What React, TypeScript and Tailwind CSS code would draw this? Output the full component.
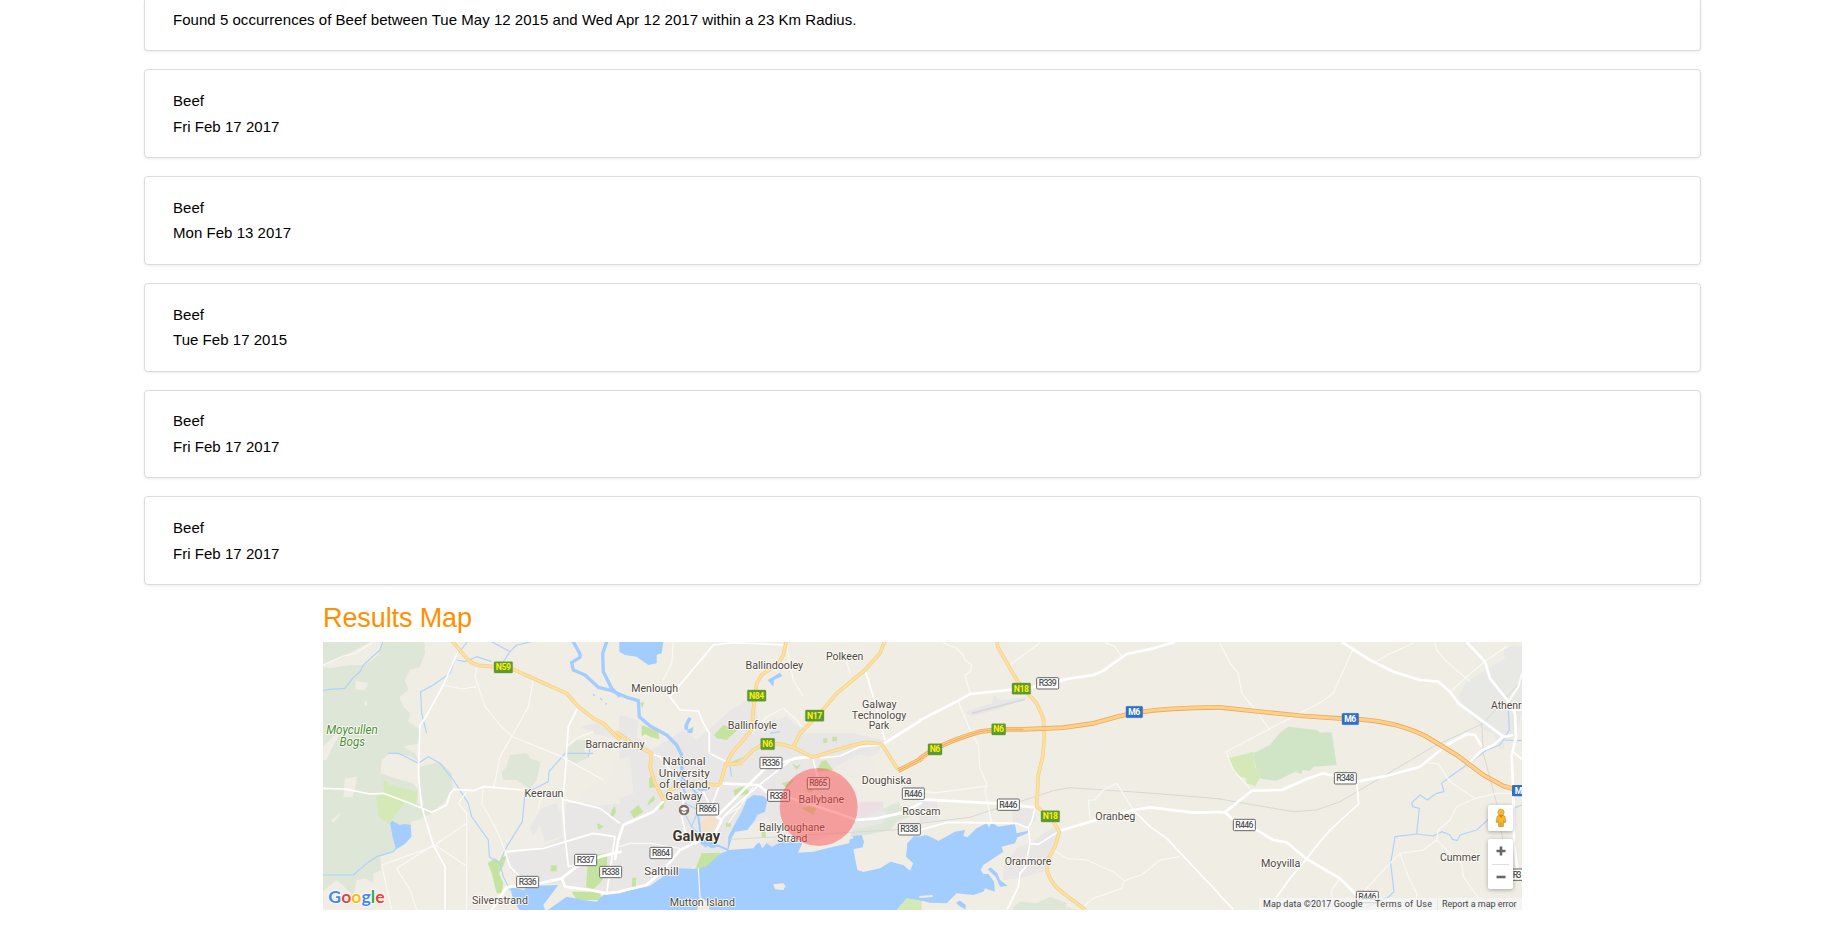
import React from "react";

const results = [
  { name: "Beef", date: "Fri Feb 17 2017" },
  { name: "Beef", date: "Mon Feb 13 2017" },
  { name: "Beef", date: "Tue Feb 17 2015" },
  { name: "Beef", date: "Fri Feb 17 2017" },
  { name: "Beef", date: "Fri Feb 17 2017" },
];

// The map is drawn in tiles; each has its own origin and three units per pixel.
type Tile = "W" | "C" | "E" | "F" | "N";
const origins: Record<Tile, string> = {
  W: "translate(-13 -52) scale(0.33333)",
  C: "translate(297 -12) scale(0.33333)",
  E: "translate(597 -12) scale(0.33333)",
  F: "translate(897 -12) scale(0.33333)",
  N: "translate(207 -2) scale(0.33333)",
};

type Layer = { fill?: string; stroke?: string; width?: number; shapes: [Tile, string][] };

const yellowRoads: [Tile, string][] = [
  ["W", "M424 150 L470 205 Q485 222 505 226 L550 230 L610 238 L680 270 L770 310 L805 350 L850 385 L880 400 L930 450"],
  ["N", "M258 275 L290 298 L320 318 L365 340 L360 380 L375 430 L402 482"],
  ["C", "M130 512 L150 480 L200 460 L270 463 L300 465"],
  ["C", "M499 32 L490 75 L475 100 L425 135 L410 160 L400 240 L395 300 L335 370 L315 410 L300 465"],
  ["C", "M795 32 L780 70 L735 120 L650 190 L600 250 L540 310 L520 350"],
  ["C", "M318 404 L360 400 L400 360 L430 342 L480 342 L520 352 L578 382 L700 345 L740 337 L785 342 L815 390 L835 420"],
  ["E", "M231 32 L233 50 L270 115 L300 165 L350 220 L370 265 L373 320 L368 380 L355 435 L350 530 L395 565 L418 605 L405 650 L383 690 L382 725 Q395 765 430 790 L497 840"],
];

const motorway: [Tile, string][] = [
  ["C", "M835 422 L905 386"],
  ["E", "M-2 387 L30 365 Q90 330 180 305 L240 298 L310 298 L430 293 L520 280 L600 258 L650 248 Q740 233 905 232"],
  ["F", "M-2 232 L130 246 L250 258 L370 266 L420 268 Q480 273 530 286 Q580 300 620 320 L710 375 L790 435 L850 468 L920 488"],
];

const layers: Layer[] = [
  {
    fill: "#dde6d7",
    shapes: [
      ["W", "M30 150 L343 150 L345 190 L330 230 L300 240 L285 270 L295 300 L268 322 L280 350 L300 370 L295 395 L325 415 L330 460 L300 465 L278 470 L315 490 L325 515 L305 500 L240 490 L215 510 L212 550 L255 565 L310 580 L325 600 L322 640 L388 655 L365 670 L325 690 L303 695 L305 740 L260 780 L210 800 L215 840 L190 850 L190 880 L165 865 L140 870 L130 915 L80 870 L30 910 Z"],
      ["W", "M330 530 L390 515 L425 550 L428 595 L400 640 L370 660 L345 655 L330 600Z"],
      ["W", "M600 495 L650 490 L662 506 L692 515 L680 570 L660 600 L620 570 L580 570 L575 545 L590 530Z"],
      ["W", "M765 480 L800 450 L850 450 L820 480 L840 500 L800 520 L775 510Z"],
      ["C", "M720 565 L770 545 L835 515 L850 540 L820 550 L905 545 L830 575 L810 600 L740 615 L690 622 L700 590Z"],
      ["E", "M280 832 L300 815 L350 820 L390 800 L440 820 L435 845 L280 845Z M440 832 L495 845 L440 845Z"],
    ],
  },
  {
    fill: "#f0ede5",
    shapes: [
      ["W", "M30 228 L100 200 L185 152 L218 152 L205 195 L165 225 L120 225 L60 235Z"],
      ["W", "M137 273 L175 278 L165 302 L136 298Z M163 335 L170 332 L172 347 L164 345Z"],
      ["W", "M105 565 L140 560 L138 585 L128 622 L100 622Z M65 690 L90 668 L85 685 L66 700Z"],
      ["W", "M30 480 L75 435 L90 430 L60 485 L50 510 L30 512Z"],
    ],
  },
  {
    fill: "#d0e5c5",
    shapes: [["F", "M100 370 L150 345 L178 310 L205 290 L290 300 L300 308 L335 307 L350 405 L280 410 L270 422 L247 420 L245 432 L225 425 L180 448 L165 453 L120 445 L108 415Z"]],
  },
  {
    fill: "#e9e7e5",
    shapes: [
      ["W", "M585 795 L700 770 L760 740 L768 640 L800 640 L930 640 L930 910 L840 900 L765 885 L690 880 L640 875 L600 840Z"],
      ["W", "M660 710 L695 655 L740 640 L755 680 L755 740 L705 755 L690 705 L670 740Z M810 410 L860 400 L930 430 L930 450 L850 430Z"],
      ["C", "M-2 255 L55 270 L50 320 L95 360 L190 300 L230 330 L265 300 L310 260 L330 240 L395 205 L420 280 L500 260 L560 310 L700 310 L790 330 L775 370 L690 400 L660 440 L710 480 L715 530 L760 540 L800 545 L790 580 L700 600 L560 640 L330 655 L230 705 L90 780 L-2 790 Z"],
      ["E", "M275 540 L340 530 L350 570 L325 590 L280 580Z M295 650 L330 640 L400 590 L415 610 L385 720 L300 745 L250 750 L250 710Z"],
      ["E", "M135 245 L215 220 L220 195 L240 210 L330 200 L240 235 L155 260Z M-2 510 L50 510 L55 570 L-2 575Z"],
    ],
  },
  {
    fill: "#e8e9e5",
    shapes: [["F", "M715 200 L740 155 L855 85 L850 60 L880 45 L906 50 L906 240 L890 320 L850 330 L855 360 L835 350 L820 310 L790 300 L740 240Z"]],
  },
  {
    fill: "#efece6",
    shapes: [
      ["C", "M600 435 L720 372 L777 388 L770 440 L700 460 L690 440Z M330 620 L440 560 L475 620 L400 655 L330 655Z"],
      ["W", "M800 620 L860 580 L930 590 L930 640 L850 650Z"],
      ["N", "M250 360 L300 350 L310 460 L270 475 L230 440Z"],
    ],
  },
  { fill: "#ede0e4", shapes: [["C", "M715 515 L790 515 L790 535 L740 560 L715 565Z"]] },
  { fill: "#f5e0c8", shapes: [["C", "M240 580 L262 560 L290 560 L292 590 L262 605 L245 600Z"]] },
  {
    fill: "#d5e9b8",
    shapes: [
      ["W", "M220 568 L240 585 L322 605 L318 642 L285 635 L260 670 L235 700 L205 680 L198 620 L222 600Z"],
      ["F", "M25 385 L100 365 L105 410 L122 440 L105 468 L80 460 L78 445 L60 440 L40 425Z"],
      ["C", "M828 842 L860 805 L905 812 L905 842z"],
    ],
  },
  {
    fill: "#c5e3a0",
    shapes: [
      ["W", "M533 820 L555 805 L570 815 L575 800 L590 798 L580 828 L567 850 L580 880 L575 910 L560 910 L545 850Z"],
      ["W", "M835 795 L892 790 L890 850 L870 880 L850 897 L828 892Z M785 905 L870 905 L875 930 L800 930Z M865 700 L880 710 L865 720Z M902 672 L915 648 L918 665 L905 685Z M722 826h18v18h-18z"],
      ["N", "M335 255 L385 275 L388 298 L360 290 L345 282 L335 290Z M300 515 L325 495 L340 515 L312 535Z M355 485 L372 465 L375 480 L352 497Z M388 490 L405 483 L400 505 L388 510Z M357 415 L370 405 L378 440 L358 445Z M330 190 L342 185 L338 205Z M240 528 L250 500 L258 515 L248 533Z M200 550 L222 560 L205 568Z"],
      ["C", "M282 315 L310 285 L352 300 L320 330 L290 325Z M225 718 L245 670 L303 668 L265 715Z M610 325h12v14h-12z M637 320h14v14h-14z M340 480 L375 468 L390 490 L345 500Z M515 400 L530 408 L543 403 L530 420z M603 395 L618 390 L640 420 L590 425Z M485 460 L525 448 L500 475Z M425 605h12v18h-12z M37 743h11v30h-13z M325 400 L370 380 L345 402z M545 535 L560 530 L592 530 L580 555Z M318 578h15v12h-15z M555 480 L590 468 L570 490z"],
    ],
  },
  {
    fill: "#a3ccff",
    shapes: [
      ["W", "M240 700 L246 692 L270 705 L285 702 L302 705 L304 740 L285 762 L258 778 L248 740Z"],
      ["W", "M600 890 L640 900 L660 888 L745 885 L730 905 L700 945 L705 960 L635 970 L610 930Z M700 970 L770 920 L820 930 L860 935 L880 915 L935 905 L935 970Z"],
      ["W", "M850 310 L856 317 L850 318Z M870 322 L878 330 L872 330Z M886 338 L892 342 L886 344z"],
      ["C", "M-2 34 L130 34 L125 70 L110 75 L110 100 L85 105 L50 80 L15 75 L-2 65Z"],
      ["C", "M443 150 L480 128 L487 138 L462 150 L460 170Z M193 285 L205 262 L215 265 L205 285 L203 302 L193 298Z M203 300 L220 290 L217 310 L202 308Z"],
      ["C", "M-2 786 L90 768 L150 725 L175 715 L235 717 L260 708 L303 670 L322 662 L295 650 L275 655 L248 640 L235 615 L262 628 L285 640 L323 656 L325 620 L340 590 L365 545 L380 510 L400 495 L430 498 L442 510 L435 545 L412 555 L405 570 L382 600 L345 605 L335 625 L325 660 L400 655 L412 640 L420 640 L427 655 L440 640 L455 650 L490 632 L545 635 L545 645 L533 668 L580 665 L640 650 L687 640 L690 628 L700 625 L698 618 L725 615 L732 635 L728 652 L700 658 L712 720 L730 726 L780 715 L812 695 L850 705 L870 722 L880 700 L858 680 L862 640 L882 618 L905 620 L905 812 L860 805 L828 842 L-2 842Z"],
      ["E", "M-2 620 L18 615 L40 625 L55 633 L105 605 L135 600 L130 618 L142 622 L170 595 L200 580 L207 592 L215 578 L235 590 L285 582 L290 610 L325 602 L322 610 L292 622 L285 640 L245 650 L250 665 L190 705 L182 720 L190 732 L205 732 L222 755 L225 785 L195 775 L190 785 L160 795 L110 790 L80 820 L30 818 L-2 810Z M203 718 L212 712 L232 730 L240 750 L263 768 L240 770 L228 742Z M108 818 L120 812 L138 825 L136 838 L118 828Z"],
    ],
  },
  { fill: "#f0ede5", shapes: [["C", "M460 763 L490 760 L497 768 L490 780 L465 778Z M232 838 L240 800 L268 820 L268 842 L232 842Z"], ["E", "M-2 798 L38 795 L38 801 L-2 804Z"]] },
  {
    stroke: "#a3ccff",
    width: 10,
    shapes: [
      ["N", "M127 0 L150 42 L150 52 L125 68 L130 90 L165 105 L205 142 L245 152 L290 172 L325 182 L328 230 L360 258 L410 285 L440 315 L455 345 L456 410"],
      ["N", "M232 0 L218 40 L220 95 L245 145 L270 170"],
    ],
  },
  { stroke: "#a3ccff", width: 6, shapes: [["C", "M183 440 L230 490 L235 560 L245 640 L260 650"], ["C", "M183 450 L195 490 M222 470 L240 480 L262 478"]] },
  {
    stroke: "#afd2fb",
    width: 3.5,
    shapes: [
      ["W", "M218 155 L210 180 L160 225 L150 245 L130 262 L105 295 L60 298 L39 302"],
      ["W", "M39 855 L130 855 L170 820 L200 800 L250 785 L262 770"],
      ["W", "M235 490 L265 490 L325 520 L355 500 L390 520 L430 570 L475 640 L485 680 L535 750 L538 800 L570 820 L580 860 L600 900 L615 905"],
      ["W", "M570 815 L590 770 L637 695 L645 610 L715 575 L717 545 L765 490 L825 490 L850 490 M840 475 L835 500"],
      ["W", "M473 155 L440 195 L420 250 L370 285 L332 305 L335 370 L350 430 M440 210 L465 215 L500 200 L545 215 M545 155 L600 185 L580 215 M600 185 L620 165 L665 155"],
      ["C", "M183 545 L200 560 L215 590 L250 625 M195 520 L235 540 L215 590 M330 410 L335 440 M450 310 L480 305"],
      ["F", "M865 240 L868 300 L840 345 L800 360 L740 405 L690 440 L665 460 L672 485 L650 490 L622 510 L600 495 L575 518 L578 530 L598 535 L590 612 L525 620 L512 700 L522 785 L505 802 L440 830"],
      ["F", "M590 612 L640 618 L665 605 L690 615 L697 628 L712 632 L720 615 L770 600 L805 568 M850 330 L906 332 M880 535 L906 525"],
    ],
  },
  {
    stroke: "#d8d8d5",
    width: 3,
    shapes: [
      ["C", "M330 628 L490 620 L640 610 L905 595"],
      ["E", "M-2 580 L150 562 L200 545 L300 515 L400 482 L450 473 L700 490 L905 507"],
      ["F", "M-2 507 L220 545 L290 540 L360 515 L480 445 L640 350 L790 280 L906 150 M785 280 L790 370 L830 520 L850 640 L875 780"],
    ],
  },
  { stroke: "#d8d8d8", width: 5, shapes: [["E", "M155 250 L315 208"]] },
  {
    stroke: "#faf9f5",
    width: 3.5,
    shapes: [
      ["W", "M39 225 L100 198 L135 190 L185 160 M670 270 L655 350 L605 440 L570 500 L552 590 M500 230 L495 260 L525 350 L570 405 L608 440 L755 500 L880 570 M400 285 L455 297 L500 290"],
      ["W", "M520 590 L515 640 L560 720 L588 790 M470 700 L375 765 L465 825 M470 605 L445 640 L470 670 L470 960 M370 770 L215 825 L245 960 M370 765 L260 835 L300 900 L320 960 M685 655 L690 630 L720 605 M770 470 L800 445 L850 425"],
      ["C", "M160 36 L155 100 L130 150 M500 50 L520 150 L550 200 M395 310 L440 260 L490 235 L530 270 L545 290 M670 60 L690 130"],
      ["C", "M180 655 L90 640 L30 640 L-2 650 M320 555 L360 530 L400 470 M325 580 L380 500 M235 715 L240 800 L242 830"],
      ["E", "M70 38 L110 55 L130 75 L135 90 L155 105 L150 125 L135 135 L150 190 M115 215 L150 300 L175 345 L180 415 L202 465 L195 480 L215 580 M-2 485 L50 488 L202 468 M265 108 L360 38 M555 38 L585 50 L605 80"],
      ["E", "M510 565 L505 510 L525 510 L550 480 L590 460 L640 540 M400 660 L440 685 L500 690 L580 725 L612 752 L665 735 L720 690 L780 680 M612 752 L605 775 L520 805 L490 830"],
      ["F", "M0 40 L30 100 L55 130 L65 190 L110 245 L150 300 M90 475 L40 420 L18 365 L180 280 L300 218 L340 190 L400 55 M470 95 L500 75 L580 40 M645 38 L650 60 L680 95 L750 155 M690 188 L740 140 L800 90 L860 50"],
      ["F", "M625 398 L655 402 L690 455 L765 505 L830 490 L880 490 M765 505 L710 530 L690 570 L655 600 L650 630 L610 660 L540 670 L500 710 L440 775 L430 790 M540 670 L565 740 L590 790 L590 838 M650 630 L690 670 L725 700 L730 740 L780 810 M360 745 L335 780 L335 815"],
    ],
  },
  {
    stroke: "#ffffff",
    width: 5,
    shapes: [
      ["W", "M447 178 L400 285 L345 385 L330 405 L325 550 L335 650 L370 765 L405 830 L405 960 M39 595 L105 597 L180 612 L220 610 L300 640 L365 667 L410 645 L420 610 L432 598 L490 602 L520 590 L640 600"],
      ["W", "M760 628 L870 655 L930 700 M802 355 L775 410 L770 480 L765 560 L758 640 L765 740 L775 830 L800 825 M585 785 L700 775 L850 730 L915 740 L890 910 M585 785 L600 830 L640 870"],
      ["C", "M340 405 L268 370 L268 310 L250 280 L235 243 L180 240 L150 200 L280 45 L340 38 L500 45 M735 120 L760 200 L795 330 M578 382 L600 470 M270 540 L300 462 M190 510 L185 560 L200 620 M95 372 L120 380 L165 440"],
      ["C", "M600 384 L660 378 L720 350 L785 345 M300 575 L320 550 L415 467 L520 385 L570 378 M250 485 L280 550"],
      ["E", "M345 535 L335 575 L325 590 L330 640 L322 680 L318 710 L300 730 L295 770 L262 838 M330 640 L355 643 L415 605 M-2 600 L80 578 L130 577 L290 580 L325 595 M640 540 L690 590 L740 625 L900 795"],
      ["F", "M410 455 L416 522 L330 600 L280 660 L260 687 L210 745 L160 815 L130 838 M-2 795 L40 838 M875 362 L906 388 M865 215 L895 170 L906 130 M865 240 L906 240"],
    ],
  },
  {
    stroke: "#ffffff",
    width: 8,
    shapes: [
      ["W", "M545 960 L590 892 L690 880 L755 865 L800 830 L870 800 L935 785 M755 865 L765 890 L840 900 L890 910 L935 905"],
      ["N", "M402 482 L370 515 L280 555 L265 600 L255 660"],
      ["C", "M-2 785 L80 765 L130 720 L180 660 L285 610 L305 570 L290 560 L340 510 L440 410 L530 385 L578 380 M300 460 L415 465 L440 485 L500 500 L640 545 L710 570 L770 565 L850 548 L905 518 M785 345 L905 270"],
      ["E", "M-2 272 L115 212 L150 192 L240 183 L350 170 L450 145 L520 135 L550 122 L620 72 L700 55 L765 36 M-2 508 L230 520 L345 532 M418 603 L520 572 L640 540 L690 532 L820 548 L905 546"],
      ["F", "M365 36 L450 90 L520 125 L600 150 L655 155 L690 185 L715 220 L790 275 L850 320 L880 315 M-2 547 L15 547 L95 482 L185 480 L260 447 L310 430 L345 438 M410 455 L490 440 L600 410 L680 345 L740 312 L765 315 L785 350 M785 362 L740 405 M850 320 L820 345 L785 362"],
      ["F", "M15 547 L40 570 M105 597 L160 630 L200 637 L260 687 L360 745 L410 795 M740 36 L795 95 L810 145 L865 215 L885 250 L888 320 L875 380 L880 480 L882 640 L892 715"],
    ],
  },
  { stroke: "#efd08f", width: 11, shapes: yellowRoads },
  { stroke: "#ffe09b", width: 7, shapes: yellowRoads },
  { stroke: "#ecab5c", width: 14, shapes: motorway },
  { stroke: "#ffcf8c", width: 9, shapes: motorway },
  { stroke: "#e8a34c", width: 2.5, shapes: [["C", "M835 422 L905 386"], ["E", "M-2 387 L30 365 Q90 330 180 305 L240 298 L310 298"]] },
];

const labels: [Tile, number, number, string, number][] = [
  ["N", 255, 323, "Barnacranny", 177],
  ["W", 702, 620, "Keeraun", 117],
  ["W", 570, 942, "Silverstrand", 168],
  ["N", 374, 157, "Menlough", 140],
  ["C", 463, 118, "Ballindooley", 173],
  ["C", 674, 91, "Polkeen", 112],
  ["C", 397, 298, "Ballinfoyle", 148],
  ["C", 778, 234, "Galway", 104],
  ["C", 777, 267, "Technology", 163],
  ["C", 777, 298, "Park", 62],
  ["C", 192, 405, "National", 129],
  ["C", 193, 440, "University", 153],
  ["C", 194, 475, "of Ireland,", 153],
  ["C", 191, 510, "Galway", 111],
  ["C", 604, 520, "Ballybane", 137],
  ["C", 516, 603, "Ballyloughane", 198],
  ["C", 517, 635, "Strand", 91],
  ["C", 800, 461, "Doughiska", 149],
  ["C", 904, 555, "Roscam", 115],
  ["C", 124, 734, "Salthill", 103],
  ["C", 247, 828, "Mutton Island", 196],
  ["E", 586, 569, "Oranbeg", 120],
  ["E", 324, 704, "Oranmore", 140],
  ["F", 182, 710, "Moyvilla", 118],
  ["F", 720, 694, "Cummer", 120],
  ["F", 859, 236, "Athenr", 92],
];

const shields: [Tile, number, number, string][] = [
  ["W", 580, 232, "N59"],
  ["W", 827, 810, "R337"],
  ["W", 902, 846, "R338"],
  ["W", 653, 876, "R336"],
  ["C", 410, 197, "N84"],
  ["C", 584, 257, "N17"],
  ["C", 443, 342, "N6"],
  ["C", 453, 399, "R336"],
  ["C", 476, 497, "R338"],
  ["C", 263, 538, "R866"],
  ["C", 595, 460, "R865"],
  ["C", 123, 669, "R864"],
  ["C", 880, 491, "R446"],
  ["C", 868, 598, "R338"],
  ["E", 383, 160, "R339"],
  ["E", 304, 176, "N18"],
  ["E", 236, 298, "N6"],
  ["E", 45, 358, "N6"],
  ["E", 643, 246, "M6"],
  ["E", 265, 524, "R446"],
  ["E", 391, 559, "N18"],
  ["F", 391, 267, "M6"],
  ["F", 376, 445, "R348"],
  ["F", 73, 585, "R446"],
  ["F", 442, 801, "R446"],
];

function Shield({ x, y, text }: { x: number; y: number; text: string }) {
  const kind = text[0];
  const w = kind === "R" ? 66 : text.length === 3 ? 56 : kind === "M" ? 50 : 42;
  const bg = kind === "R" ? "#ffffff" : kind === "N" ? "#5d9837" : "#2f6fc4";
  const fg = kind === "R" ? "#555555" : kind === "N" ? "#fff000" : "#ffffff";
  return (
    <g>
      <rect x={x - w / 2} y={y - 17} width={w} height={34} rx={3} fill={bg} stroke={kind === "R" ? "#666666" : bg} strokeWidth={kind === "R" ? 3 : 1} />
      <text
        x={x}
        y={y + 9}
        textAnchor="middle"
        textLength={kind === "R" ? 54 : text.length === 3 ? 46 : kind === "M" ? 36 : 32}
        fontSize={26}
        fontWeight={kind === "R" ? 500 : 700}
        fill={fg}
      >
        {text}
      </text>
    </g>
  );
}

function MapDrawing() {
  return (
    <svg className="block h-full w-full font-[Roboto,sans-serif]" viewBox="0 0 1199 268" preserveAspectRatio="none">
      <rect width="1199" height="268" fill="#f0ede5" />
      {layers.map((layer, i) => (
        <g key={i} fill={layer.fill ?? "none"} stroke={layer.stroke ?? "none"} strokeWidth={layer.width} strokeLinejoin="round">
          {layer.shapes.map(([tile, d], j) => (
            <path key={j} d={d} transform={origins[tile]} />
          ))}
        </g>
      ))}
      {shields.map(([tile, x, y, text], i) => (
        <g key={i} transform={origins[tile]}>
          <Shield x={x} y={y} text={text} />
        </g>
      ))}
      <g transform={origins.F} fontSize="26">
        <rect x="876" y="465" width="50" height="34" rx="3" fill="#2f6fc4" />
        <text x="884" y="491" fontWeight="700" fill="#ffffff" textLength="20">M</text>
        <rect x="873" y="717" width="66" height="34" rx="3" fill="#ffffff" stroke="#666666" strokeWidth="3" />
        <text x="878" y="743" fontWeight="500" fill="#555555" textLength="26">R3</text>
      </g>
      <g fill="#4e4637" stroke="#ffffff" strokeWidth="5" strokeLinejoin="round" textAnchor="middle" fontSize="34.5" paintOrder="stroke">
        {labels.map(([tile, x, y, text, length], i) => (
          <text key={i} x={x} y={y} textLength={length} lengthAdjust="spacingAndGlyphs" transform={origins[tile]}>
            {text}
          </text>
        ))}
        <text x="229" y="633" textLength="143" lengthAdjust="spacingAndGlyphs" fontSize="43" fontWeight="700" fill="#3c3529" transform={origins.C}>
          Galway
        </text>
        <g transform={origins.W} fill="#4c8c2b" fontStyle="italic" fontSize="36">
          <text x="126" y="433" textLength="155" lengthAdjust="spacingAndGlyphs">Moycullen</text>
          <text x="127" y="468" textLength="77" lengthAdjust="spacingAndGlyphs">Bogs</text>
        </g>
      </g>
      <g transform={origins.C}>
        <circle cx="192" cy="540" r="17" fill="#7d6a63" stroke="#ffffff" strokeWidth="2" />
        <path d="M180 537 L192 531 L204 537 L192 543Z M185 542 L192 546 L199 542 V547 L192 551 L185 547Z" fill="#ffffff" />
        <circle cx="596" cy="531" r="117" fill="#ff4545" fillOpacity="0.45" />
      </g>
      <text transform={origins.W} x="55" y="939" fontSize="52" textLength="169" lengthAdjust="spacingAndGlyphs" fontFamily="Lato, sans-serif" fontWeight="700" stroke="#ffffff" strokeWidth="5" paintOrder="stroke">
        <tspan fill="#4285f4">G</tspan>
        <tspan fill="#ea4335">o</tspan>
        <tspan fill="#fbbc05">o</tspan>
        <tspan fill="#4285f4">g</tspan>
        <tspan fill="#34a853">l</tspan>
        <tspan fill="#ea4335">e</tspan>
      </text>
    </svg>
  );
}

function MapControls() {
  return (
    <div className="absolute right-[9px] bottom-[21px] flex w-[25px] flex-col gap-2">
      <button className="flex h-[26px] items-center justify-center rounded-[2px] bg-white shadow-[0_1px_4px_rgba(0,0,0,0.3)]" aria-label="Street View">
        <svg width="12" height="20" viewBox="0 0 36 60">
          <path d="M7 24 Q18 18 29 24 L33 42 L28 44 L26 38 L25 56 H19 L18 44 L17 56 H11 L10 38 L8 44 L3 42Z" fill="#fbb825" stroke="#b98a3a" strokeWidth="2" />
          <circle cx="18" cy="13" r="9.5" fill="#fbb825" stroke="#b99a60" strokeWidth="2" />
          <path d="M12 22 H24 L18 30Z" fill="#e8711c" />
        </svg>
      </button>
      <div className="flex h-[50px] flex-col items-center rounded-[2px] bg-white shadow-[0_1px_4px_rgba(0,0,0,0.3)]">
        <button className="flex h-[25px] w-full items-center justify-center" aria-label="Zoom in">
          <svg width="10" height="10" viewBox="0 0 10 10">
            <path d="M5 0.5V9.5M0.5 5H9.5" stroke="#666666" strokeWidth="2.6" />
          </svg>
        </button>
        <div className="h-px w-[17px] bg-[#e0e0e0]" />
        <button className="flex h-6 w-full items-center justify-center" aria-label="Zoom out">
          <svg width="10" height="10" viewBox="0 0 10 10">
            <path d="M0.5 5H9.5" stroke="#666666" strokeWidth="2.6" />
          </svg>
        </button>
      </div>
    </div>
  );
}

const cardBase = "border-[#dcdcdc] bg-white px-7 shadow-[0_1px_3px_rgba(0,0,0,0.08)]";

export default function App() {
  return (
    <main className="h-[926px] overflow-hidden bg-white font-['Liberation_Sans',Arial,sans-serif] text-[15px] leading-[25.6px] text-black">
      <div className="ml-36 flex w-[1557px] flex-col gap-[18px] tracking-[0.035px]">
        <section className={`${cardBase} h-[51.3px] rounded-b border border-t-0 pt-[7px]`}>
          <p>Found 5 occurrences of Beef between Tue May 12 2015 and Wed Apr 12 2017 within a 23 Km Radius.</p>
        </section>
        {results.map((result, i) => (
          <section key={i} className={`${cardBase} flex h-[88.8px] flex-col justify-center rounded border`}>
            <p>{result.name}</p>
            <p>{result.date}</p>
          </section>
        ))}
      </div>
      <section className="ml-[323px] w-[1199px]">
        <h2 className="h-[56.7px] pt-[16.7px] text-[27px] leading-8 tracking-[-0.1px] text-[#ff8f00]">Results Map</h2>
        <div className="relative h-[268px] overflow-hidden">
          <MapDrawing />
          <MapControls />
          <div className="absolute right-0 bottom-0 flex h-3 items-center bg-[#f5f5f5]/75 font-[Roboto,sans-serif] text-[9px] leading-3 whitespace-nowrap text-[#444444]">
            <span className="w-[112px] pl-1 tracking-[0.08px]">Map data ©2017 Google</span>
            <span className="w-[66px] pl-1 tracking-[0.35px]">Terms of Use</span>
            <span className="w-[85px] border-l border-[#e8e8e8] pl-1 tracking-[-0.03px]">Report a map error</span>
          </div>
        </div>
      </section>
    </main>
  );
}
